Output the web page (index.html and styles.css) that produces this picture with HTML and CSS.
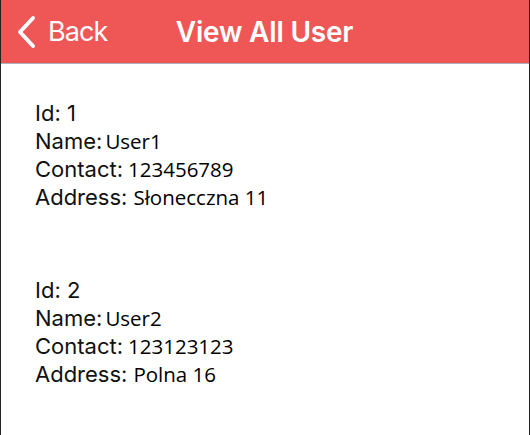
FILE: index.html
```html
<!DOCTYPE html>
<html>
<head>
<meta charset="utf-8">
<link rel="stylesheet" href="styles.css">
</head>
<body>
<div class="screen">
  <header class="nav">
    <div class="back">
      <svg class="chev" width="22" height="34" viewBox="0 0 22 34"><path d="M18 3 L5 17 L18 31" fill="none" stroke="#fff" stroke-width="4" stroke-linecap="round" stroke-linejoin="round"/></svg>
      <span class="back-text">Back</span>
    </div>
    <div class="title">View All User</div>
    <div class="spacer"></div>
  </header>
  <main class="list">
    <section class="user">
      <div class="row"><span class="label">Id: 1</span></div>
      <div class="row"><span class="label">Name:</span><span class="value v-name">User1</span></div>
      <div class="row"><span class="label">Contact:</span><span class="value v-contact">123456789</span></div>
      <div class="row"><span class="label">Address:</span><span class="value v-addr">Słonecczna 11</span></div>
    </section>
    <section class="user">
      <div class="row"><span class="label">Id: 2</span></div>
      <div class="row"><span class="label">Name:</span><span class="value v-name">User2</span></div>
      <div class="row"><span class="label">Contact:</span><span class="value v-contact">123123123</span></div>
      <div class="row"><span class="label">Address:</span><span class="value v-addr">Polna 16</span></div>
    </section>
  </main>
</div>
</body>
</html>
```
FILE: styles.css
```css
html, body {
  margin: 0;
  padding: 0;
  background: #fff;
}
.screen {
  width: 530px;
  height: 435px;
  box-sizing: border-box;
  border-left: 1px solid #222;
  border-right: 1px solid #222;
  overflow: hidden;
  font-family: "Inter", "Liberation Sans", sans-serif;
}
.nav {
  height: 63px;
  background: #ef5656;
  border-bottom: 1px solid #aab4b8;
  display: grid;
  grid-template-columns: 1fr auto 1fr;
  align-items: center;
  color: #fff;
}
.back {
  display: flex;
  align-items: center;
  padding-left: 14px;
}
.chev {
  display: block;
  margin-top: 1px;
}
.back-text {
  font-size: 27px;
  margin-left: 11px;
  font-weight: 400;
  letter-spacing: -0.9px;
}
.title {
  font-size: 28px;
  font-weight: 600;
  letter-spacing: -0.2px;
  margin-right: 1px;
}
.list {
  padding: 35px 0 0 34px;
  display: flex;
  flex-direction: column;
  gap: 65px;
}
.row {
  height: 28px;
  line-height: 28px;
  display: flex;
  align-items: baseline;
  color: #111;
}
.label {
  font-size: 22px;
  font-family: "Inter", sans-serif;
}
.value {
  font-family: "Open Sans", "Noto Sans", sans-serif;
  font-size: 20.5px;
  color: #000;
}
.v-name { margin-left: 3px; }
.v-contact { margin-left: 5px; }
.v-addr { margin-left: 6px; }
```
